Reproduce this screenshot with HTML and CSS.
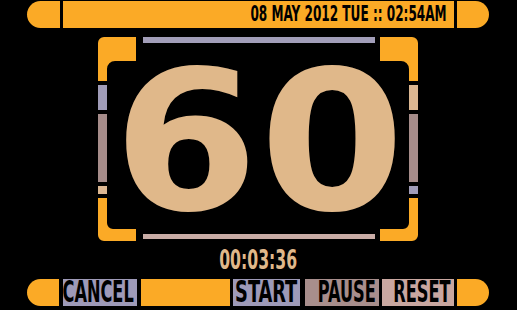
FILE: index.html
```html
<!DOCTYPE html>
<html>
<head>
<meta charset="utf-8">
<link rel="stylesheet" href="styles.css">
</head>
<body>
<div class="screen">
  <div class="bar bar-top">
    <div class="cap cap-left"></div>
    <div class="fill date"><span class="date-text">08 MAY 2012 TUE :: 02:54AM</span></div>
    <div class="cap cap-right"></div>
  </div>

  <div class="frame">
    <div class="rail">
      <svg class="bracket" width="38" height="44" viewBox="0 0 38 44"><path d="M6 0H38V24H17A8 8 0 0 0 9 32V44H0V6A6 6 0 0 1 6 0Z" fill="#fbaa26"/></svg>
      <div class="rseg lav r-25"></div>
      <div class="rseg mauve r-68"></div>
      <div class="rseg tan r-8"></div>
      <svg class="bracket" width="38" height="43" viewBox="0 0 38 43"><path d="M0 0H9V25A6 6 0 0 0 15 31H38V43H6A6 6 0 0 1 0 37Z" fill="#fbaa26"/></svg>
    </div>
    <div class="center">
      <div class="hline hline-top"></div>
      <div class="digits">60</div>
      <div class="hline hline-bottom"></div>
    </div>
    <div class="rail rail-right">
      <svg class="bracket" width="38" height="44" viewBox="0 0 38 44"><path d="M0 0H32A6 6 0 0 1 38 6V44H29V32A8 8 0 0 0 21 24H0Z" fill="#fbaa26"/></svg>
      <div class="rseg tan r-25"></div>
      <div class="rseg mauve r-68"></div>
      <div class="rseg lav r-8"></div>
      <svg class="bracket" width="38" height="43" viewBox="0 0 38 43"><path d="M29 0H38V37A6 6 0 0 1 32 43H0V31H23A6 6 0 0 0 29 25Z" fill="#fbaa26"/></svg>
    </div>
  </div>

  <div class="timer"><span class="timer-text">00:03:36</span></div>

  <div class="bar bar-bottom">
    <div class="cap cap-left cap-b"></div>
    <div class="btn btn-lav w-cancel"><span class="btn-text">CANCEL</span></div>
    <div class="fill w-fill"></div>
    <div class="btn btn-lav w-start"><span class="btn-text wide">START</span></div>
    <div class="btn btn-mauve w-pause"><span class="btn-text">PAUSE</span></div>
    <div class="btn btn-pink w-reset"><span class="btn-text">RESET</span></div>
    <div class="cap cap-right cap-b"></div>
  </div>
</div>
</body>
</html>
```

FILE: styles.css
```css
html, body {
  margin: 0;
  padding: 0;
  background: #000;
}

.screen {
  width: 517px;
  height: 310px;
  background: #000;
  padding-top: 1px;
  box-sizing: border-box;
  display: flex;
  flex-direction: column;
}

.bar {
  display: flex;
  gap: 3px;
  margin-left: 27px;
  width: 462px;
  height: 27px;
}

.cap {
  background: #fbaa26;
  height: 27px;
  flex: none;
}
.cap-left {
  width: 33px;
  border-radius: 14px 0 0 14px;
}
.cap-right {
  width: 32px;
  border-radius: 0 14px 14px 0;
}
.cap-b.cap-left {
  width: 32px;
  margin-right: 1px;
}

.fill {
  background: #fbaa26;
  height: 27px;
}

.date {
  flex: 1;
  display: flex;
  justify-content: flex-end;
  align-items: center;
  padding-right: 7px;
}

.date-text {
  display: inline-block;
  font-family: "DejaVu Sans Condensed", "DejaVu Sans", sans-serif;
  font-weight: bold;
  font-size: 21px;
  line-height: 21px;
  color: #000;
  white-space: nowrap;
  transform: scaleX(0.64);
  transform-origin: right center;
}

/* Frame */
.frame {
  display: flex;
  margin: 9px 0 0 98px;
  width: 320px;
  height: 204px;
}

.rail {
  width: 38px;
  display: flex;
  flex-direction: column;
  gap: 4px;
}
.rail-right {
  align-items: flex-end;
}

.bracket {
  display: block;
}

.rseg {
  width: 9px;
}
.r-25 { height: 25px; }
.r-68 { height: 68px; }
.r-8 { height: 8px; }

.lav { background: #a09cb8; }
.mauve { background: #a68c8a; }
.tan { background: #dcb792; }

.center {
  flex: 1;
  display: flex;
  flex-direction: column;
  padding: 0 5px 0 7px;
}

.hline {
  height: 6px;
}
.hline-top {
  background: #a29eb9;
}
.hline-bottom {
  background: #c9aca6;
  margin-bottom: 2px;
  height: 5px;
}

.digits {
  flex: 1;
  display: flex;
  align-items: center;
  justify-content: center;
  margin: 0 -24px;
  padding-top: 6px;
  font-family: "DejaVu Sans", sans-serif;
  font-weight: bold;
  font-size: 195px;
  line-height: 150px;
  color: #e0b88a;
  letter-spacing: 1px;
  text-indent: 1px;
  transform: scaleX(1.07);
}

/* Timer */
.timer {
  height: 38px;
  display: flex;
  align-items: center;
  justify-content: center;
}
.timer-text {
  display: inline-block;
  font-family: "DejaVu Sans Condensed", "DejaVu Sans", sans-serif;
  font-weight: bold;
  font-size: 26px;
  line-height: 26px;
  color: #e0b88a;
  transform: scaleX(0.67);
}

.btn {
  height: 27px;
  flex: none;
  display: flex;
  align-items: flex-end;
  justify-content: flex-end;
  padding-right: 3px;
  box-sizing: border-box;
}
.btn-text {
  display: inline-block;
  font-family: "DejaVu Sans Condensed", "DejaVu Sans", sans-serif;
  font-weight: bold;
  font-size: 30px;
  line-height: 28px;
  color: #000;
  white-space: nowrap;
  transform: scaleX(0.6);
  transform-origin: right bottom;
}
.btn-text.wide {
  transform: scaleX(0.66);
}

.btn-lav { background: #9e9ab8; }
.btn-mauve { background: #a88e8c; }
.btn-pink { background: #c9a7a0; }

.w-cancel { width: 74px; }
.w-fill { width: 89px; margin-left: 1px; flex: none; }
.w-start { width: 67px; }
.w-pause { width: 74px; margin-left: 2px; }
.w-reset { width: 72px; }
```
